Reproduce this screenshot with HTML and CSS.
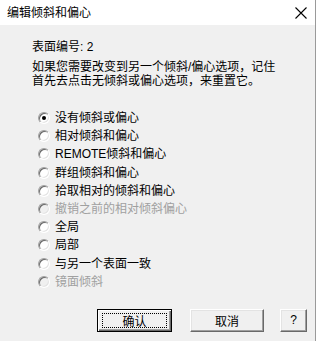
FILE: index.html
```html
<!DOCTYPE html>
<html>
<head>
<meta charset="utf-8">
<link rel="stylesheet" href="styles.css">
</head>
<body>
<div class="screen">
  <div class="window">
    <div class="titlebar">
      <span class="title">编辑倾斜和偏心</span>
      <svg class="close" width="12" height="12" viewBox="0 0 12 12"><path d="M0.5 0.5 L11.5 11.5 M11.5 0.5 L0.5 11.5" stroke="#000" stroke-width="1.1" fill="none"/></svg>
    </div>
    <div class="content">
      <div class="surface">表面编号:&nbsp;2</div>
      <div class="note">如果您需要改变到另一个倾斜/偏心选项，记住<br>首先去点击无倾斜或偏心选项，来重置它。</div>
      <ul class="options">
        <li class="opt"><span class="radio checked"></span><span class="label">没有倾斜或偏心</span></li>
        <li class="opt"><span class="radio"></span><span class="label">相对倾斜和偏心</span></li>
        <li class="opt"><span class="radio"></span><span class="label">REMOTE倾斜和偏心</span></li>
        <li class="opt"><span class="radio"></span><span class="label">群组倾斜和偏心</span></li>
        <li class="opt"><span class="radio"></span><span class="label">拾取相对的倾斜和偏心</span></li>
        <li class="opt disabled"><span class="radio"></span><span class="label">撤销之前的相对倾斜偏心</span></li>
        <li class="opt"><span class="radio"></span><span class="label">全局</span></li>
        <li class="opt"><span class="radio"></span><span class="label">局部</span></li>
        <li class="opt"><span class="radio"></span><span class="label">与另一个表面一致</span></li>
        <li class="opt disabled"><span class="radio"></span><span class="label">镜面倾斜</span></li>
      </ul>
      <div class="buttons">
        <button class="btn default"><span class="focus">确认</span></button>
        <button class="btn cancel"><span class="inner">取消</span></button>
        <button class="btn help"><span class="inner">?</span></button>
      </div>
    </div>
  </div>
  <div class="edge"></div>
</div>
</body>
</html>
```

FILE: styles.css
```css
* { box-sizing: border-box; }
html, body { margin: 0; padding: 0; background: #ffffff; }
body {
  font-family: "Liberation Sans", "Noto Sans CJK SC", sans-serif;
  font-size: 12px;
  color: #000;
}
.screen {
  display: flex;
  width: 320px;
  height: 341px;
  overflow: hidden;
}
.window {
  width: 316px;
  border-right: 1px solid #9a9a9a;
  display: flex;
  flex-direction: column;
}
.edge { flex: 1; background: #ffffff; }
.titlebar {
  height: 25px;
  background: #ffffff;
  display: flex;
  align-items: center;
  justify-content: space-between;
  padding: 0 8px 0 7px;
}
.title { font-size: 12px; line-height: 14px; color: #000; }
.close { display: block; margin-top: 1px; }
.content {
  flex: 1;
  background: #f0f0f0;
  padding: 15px 0 0 32px;
}
.surface { line-height: 14px; height: 14px; }
.note { margin-top: 6px; line-height: 14px; }
.options {
  list-style: none;
  margin: 21px 0 0 0;
  padding: 0 0 0 6px;
}
.opt {
  height: 18.2px;
  display: flex;
  align-items: center;
}
.label { margin-left: 5px; line-height: 14px; }
.disabled .label { color: #a0a0a0; }
.radio {
  width: 12px;
  height: 12px;
  border-radius: 50%;
  background: #ffffff;
  border: 1px solid;
  border-color: #a0a0a0 #ffffff #ffffff #a0a0a0;
  box-shadow: inset 1px 1px 0 #696969, inset -1px -1px 0 #e3e3e3;
  display: flex;
  align-items: center;
  justify-content: center;
}
.disabled .radio { background: #f0f0f0; }
.radio.checked::after {
  content: "";
  width: 4px;
  height: 4px;
  border-radius: 50%;
  background: #000;
}
.buttons {
  display: flex;
  margin-top: 18px;
  padding-left: 65px;
}
.btn {
  height: 23px;
  padding: 0;
  margin: 0;
  font-family: inherit;
  font-size: 12px;
  color: #000;
  background: #f0f0f0;
  border: 1px solid;
  border-color: #ffffff #696969 #696969 #ffffff;
  box-shadow: inset -1px -1px 0 #a0a0a0, inset 1px 1px 0 #e3e3e3;
  display: flex;
  align-items: stretch;
}
.btn .inner, .btn .focus {
  flex: 1;
  display: flex;
  align-items: center;
  justify-content: center;
}
.btn.default {
  width: 75px;
  border: 1px solid #000;
  box-shadow: inset 1px 1px 0 #ffffff, inset -1px -1px 0 #696969, inset -2px -2px 0 #a0a0a0;
  padding: 3px 4px 3px 4px;
}
.btn .focus { border: 1px dotted #000; }
.cancel { width: 74px; margin-left: 18px; }
.help { width: 27px; margin-left: 16px; }
```
